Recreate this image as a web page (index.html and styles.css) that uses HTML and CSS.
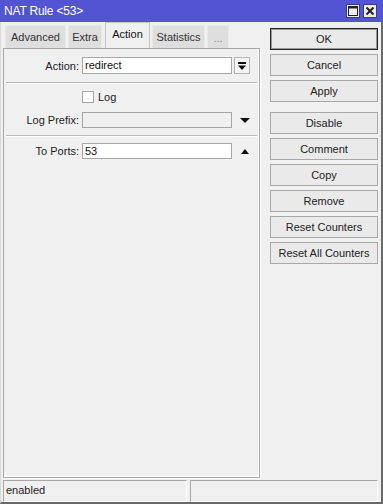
FILE: index.html
```html
<!DOCTYPE html>
<html lang="en">
<head>
    <meta charset="UTF-8">
    <title>NAT Rule &lt;53&gt;</title>
    <link rel="stylesheet" href="styles.css">
</head>
<body>
<div class="window">
    <div class="titlebar">
        <span class="title">NAT Rule &lt;53&gt;</span>
        <div class="title-btns">
            <span class="tbtn">
                <svg width="12" height="12" viewBox="0 0 12 12"><rect x="1.5" y="1.5" width="9" height="9" fill="none" stroke="#222" stroke-width="1"/><line x1="1.5" y1="2.5" x2="10.5" y2="2.5" stroke="#222" stroke-width="2"/></svg>
            </span>
            <span class="tbtn">
                <svg width="12" height="12" viewBox="0 0 12 12"><path d="M2.5 2.5 L9.5 9.5 M9.5 2.5 L2.5 9.5" stroke="#222" stroke-width="2"/></svg>
            </span>
        </div>
    </div>

    <div class="main">
        <div class="left">
            <div class="tabs">
                <span class="tab tab-advanced">Advanced</span>
                <span class="tab tab-extra">Extra</span>
                <span class="tab tab-action active">Action</span>
                <span class="tab tab-stats">Statistics</span>
                <span class="tab dots">...</span>
            </div>
            <div class="panel">
                <div class="row row-action">
                    <label>Action:</label>
                    <div class="input">redirect</div>
                    <span class="dropbtn">
                        <svg width="10" height="10" viewBox="0 0 10 10"><rect x="1" y="1" width="8" height="2" fill="#111"/><path d="M1 4.5 H9 L5 9 Z" fill="#111"/></svg>
                    </span>
                </div>
                <div class="sep"></div>
                <div class="row row-check">
                    <span></span>
                    <div class="check"><span class="box"></span><span>Log</span></div>
                </div>
                <div class="row row-prefix">
                    <label>Log Prefix:</label>
                    <div class="input disabled"></div>
                    <span class="arrow">
                        <svg width="12" height="8" viewBox="0 0 12 8"><path d="M1 2 H11 L6 7 Z" fill="#111"/></svg>
                    </span>
                </div>
                <div class="sep"></div>
                <div class="row row-ports">
                    <label>To Ports:</label>
                    <div class="input">53</div>
                    <span class="arrow">
                        <svg width="12" height="8" viewBox="0 0 12 8"><path d="M2 7 H10 L6 2 Z" fill="#111"/></svg>
                    </span>
                </div>
            </div>
        </div>

        <div class="buttons">
            <div class="btn default">OK</div>
            <div class="btn">Cancel</div>
            <div class="btn group-end">Apply</div>
            <div class="btn">Disable</div>
            <div class="btn">Comment</div>
            <div class="btn">Copy</div>
            <div class="btn">Remove</div>
            <div class="btn">Reset Counters</div>
            <div class="btn">Reset All Counters</div>
        </div>
    </div>

    <div class="statusbar">
        <div class="pane pane-left">enabled</div>
        <div class="pane pane-right"></div>
    </div>
</div>
</body>
</html>
```

FILE: styles.css
```css
* {
    box-sizing: border-box;
}
body {
    margin: 0;
    font-family: 'Liberation Sans', Arial, sans-serif;
    font-size: 11px;
    color: #222;
    background: #f0f0f0;
}
.window {
    width: 383px;
    height: 504px;
    background: #f0f0f0;
    border-left: 1px solid #d8d8d8;
    border-right: 2px solid #6a6a6a;
    border-bottom: 2px solid #6a6a6a;
    display: flex;
    flex-direction: column;
}

/* title bar */
.titlebar {
    height: 22px;
    background: #5254d4;
    color: #fff;
    display: flex;
    align-items: center;
    justify-content: space-between;
    padding: 0 4px 0 4px;
    margin-left: -1px;
    margin-right: -2px;
}
.title {
    font-size: 12px;
    letter-spacing: -0.2px;
}
.title-btns {
    display: flex;
    gap: 3px;
    margin-top: -1px;
    margin-right: 2px;
}
.tbtn {
    width: 14px;
    height: 14px;
    background: #ececec;
    border: 1px solid #3a3a8a;
    display: flex;
    align-items: center;
    justify-content: center;
}

/* main */
.main {
    height: 456px;
    display: flex;
}
.left {
    margin-left: 2px;
    width: 257px;
    display: flex;
    flex-direction: column;
}
.tabs {
    height: 26px;
    display: flex;
    align-items: flex-end;
    padding-left: 2px;
}
.tab {
    height: 23px;
    padding-top: 5px;
    text-align: center;
    background: #dedede;
    border: 1px solid #e9e9e9;
    border-bottom: none;
    color: #333;
}
.tab-advanced {
    width: 61px;
    margin-right: 2px;
}
.tab-extra {
    width: 34px;
    margin-right: 3px;
}
.tab.active {
    width: 45px;
    height: 26px;
    margin-right: 2px;
    background: #f0f0f0;
    border: 1px solid #c4c4c4;
    border-bottom: none;
    color: #111;
}
.tab-stats {
    width: 53px;
    margin-right: 2px;
}
.tab.dots {
    width: 22px;
    padding-top: 6px;
    color: #888;
}
.panel {
    flex: 1;
    border: 1px solid #a8a8a8;
    box-shadow: inset -1px -1px 0 #fff, 1px 1px 0 #fff;
    padding-top: 8px;
}
.row {
    display: grid;
    grid-template-columns: 75px 150px 18px;
    column-gap: 3px;
    align-items: center;
}
.row label {
    text-align: right;
}
.input {
    height: 17px;
    background: #fff;
    border: 1px solid #a6a6a6;
    padding: 1px 2px;
    line-height: 13px;
    color: #111;
}
.input.disabled {
    background: #f0f0f0;
}
.row-prefix .input,
.row-ports .input {
    height: 16px;
}
.dropbtn {
    width: 16px;
    height: 17px;
    margin-left: -1px;
    border: 1px solid #b4b4b4;
    background: #f6f6f6;
    display: flex;
    align-items: center;
    justify-content: center;
}
.arrow {
    display: flex;
    justify-content: center;
    margin-left: 2px;
}
.sep {
    height: 2px;
    margin: 8px 2px 0 2px;
    border-top: 1px solid #b8b8b8;
    border-bottom: 1px solid #fff;
}
.row-check {
    margin-top: 7px;
    height: 12px;
}
.check {
    display: flex;
    align-items: center;
    gap: 4px;
}
.check .box {
    width: 12px;
    height: 12px;
    background: #fff;
    border: 1px solid #a6a6a6;
}
.row-prefix {
    margin-top: 9px;
}
.row-ports {
    margin-top: 6px;
}
.row-prefix + .sep {
    margin-top: 7px;
}

/* right buttons */
.buttons {
    margin-left: 10px;
    width: 108px;
    padding-top: 6px;
    display: flex;
    flex-direction: column;
    gap: 4px;
}
.btn {
    height: 22px;
    border: 1px solid #a8a8a8;
    background: #eaeaea;
    text-align: center;
    line-height: 20px;
}
.btn.default {
    border: 1px solid #222;
    box-shadow: inset 0 0 0 1px #9a9a9a;
}
.btn.group-end {
    margin-bottom: 6px;
}

/* status bar */
.statusbar {
    height: 22px;
    margin-top: 2px;
    display: flex;
    gap: 3px;
    padding-left: 2px;
}
.pane {
    border: 1px solid #a8a8a8;
    border-right-color: #fff;
    border-bottom-color: #fff;
    padding: 3px 2px;
}
.pane-left {
    width: 184px;
}
.pane-right {
    width: 188px;
}
```
